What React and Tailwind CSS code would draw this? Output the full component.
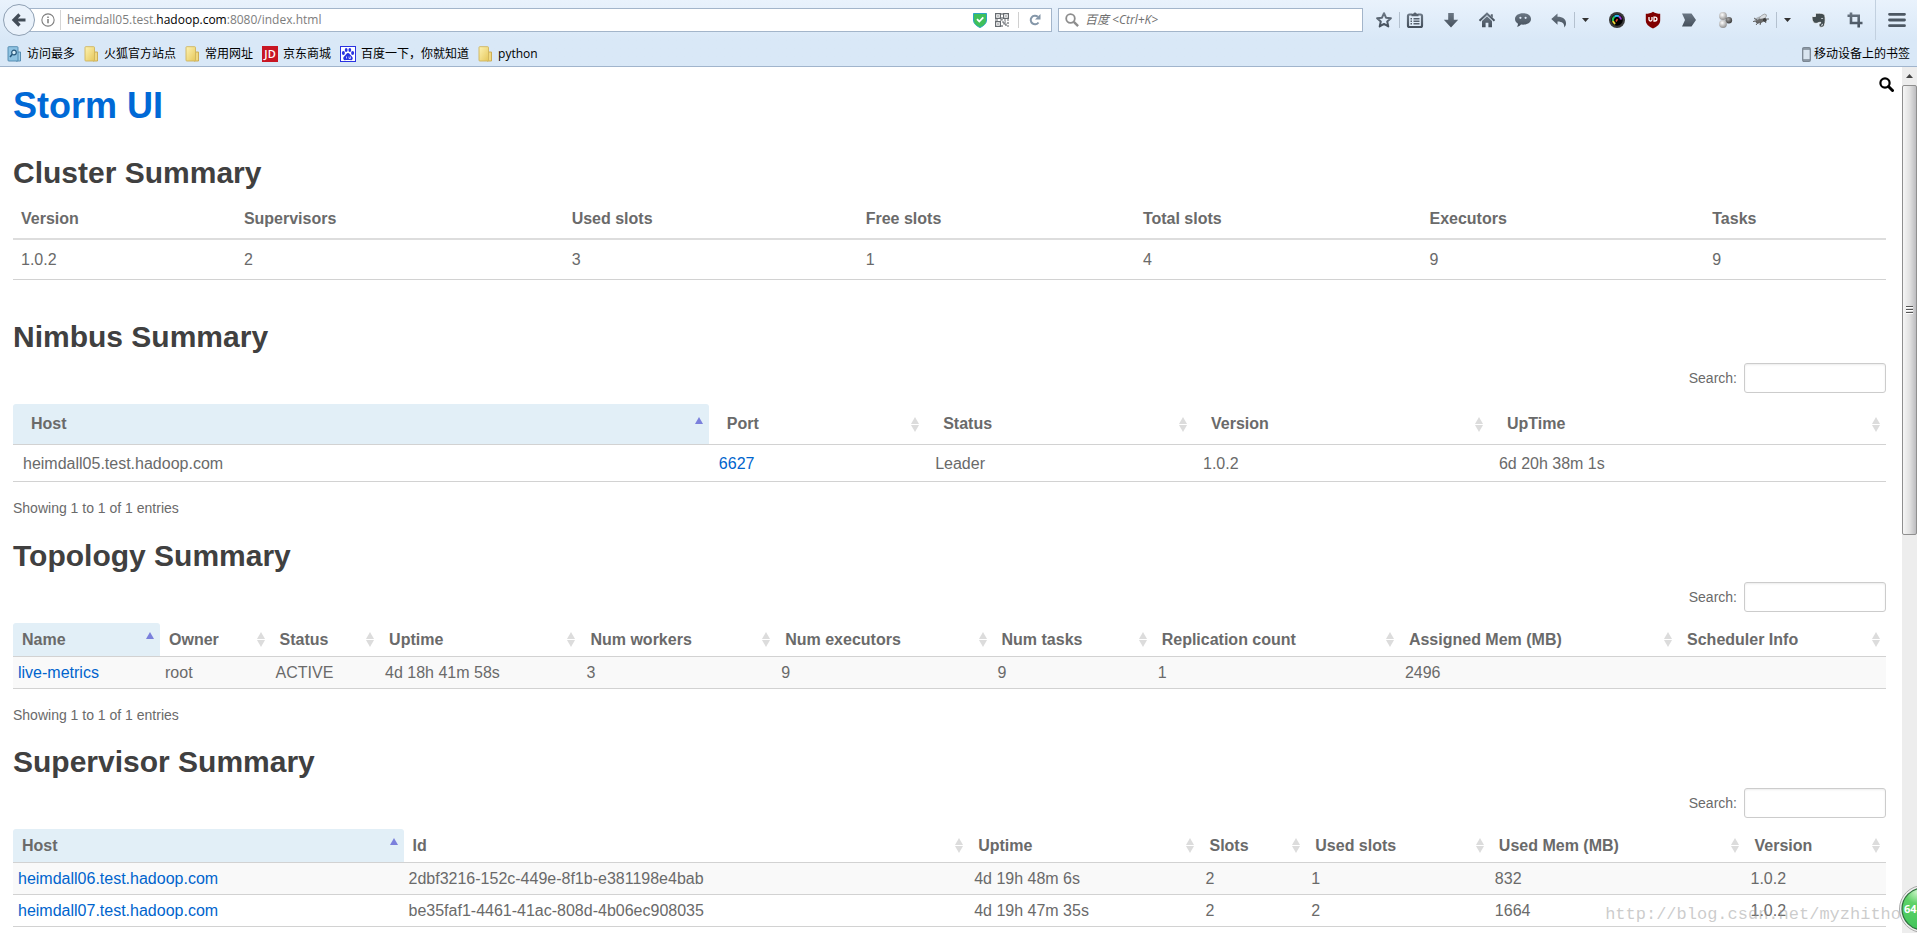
import { useState } from 'react'

const ToolbarDefs = () => (
  <svg width="0" height="0" className="absolute">
    <defs>
      <linearGradient id="steel" x1="0" y1="0" x2="0" y2="1">
        <stop offset="0" stopColor="#6b7784" />
        <stop offset="1" stopColor="#45505c" />
      </linearGradient>
      <linearGradient id="folder" x1="0" y1="0" x2="1" y2="1">
        <stop offset="0" stopColor="#fdf3b4" />
        <stop offset="1" stopColor="#e6c75a" />
      </linearGradient>
      <radialGradient id="ballLight" cx="0.4" cy="0.35" r="0.7">
        <stop offset="0" stopColor="#ffffff" />
        <stop offset="1" stopColor="#8b8b8b" />
      </radialGradient>
      <radialGradient id="ballDark" cx="0.4" cy="0.35" r="0.7">
        <stop offset="0" stopColor="#a5a5a5" />
        <stop offset="1" stopColor="#333333" />
      </radialGradient>
      <radialGradient id="badge" cx="0.35" cy="0.1" r="0.9">
        <stop offset="0" stopColor="#c5f3c4" />
        <stop offset="0.3" stopColor="#5fd267" />
        <stop offset="1" stopColor="#3fc45a" />
      </radialGradient>
    </defs>
  </svg>
)

// Toolbar icons, drawn on an 18x18 grid
const icons = {
  star: <path d="M9 2.2l2 4.5 4.9.5-3.7 3.3 1.1 4.9L9 12.9l-4.3 2.5 1.1-4.9-3.7-3.3 4.9-.5z" fill="none" stroke="url(#steel)" strokeWidth="2" strokeLinejoin="round" />,
  clipboard: (
    <>
      <path d="M6 3.5H3.5A1.5 1.5 0 0 0 2 5v9.5A1.5 1.5 0 0 0 3.5 16h11a1.5 1.5 0 0 0 1.5-1.5V5a1.5 1.5 0 0 0-1.5-1.5H12" fill="none" stroke="url(#steel)" strokeWidth="2.2" />
      <path d="M5.5 5.2V3l2-.5a1.6 1.6 0 0 1 3 0l2 .5v2.2z" fill="#56616d" />
      <path d="M4.5 7.700H6M7.5 7.700h6M4.5 10.200H6M7.5 10.200h6M4.5 12.800H6M7.5 12.800h6" stroke="#56616d" strokeWidth="1.5" />
    </>
  ),
  download: <path d="M6.2 2h5.600v6.800h4.400L9 16.500 1.800 8.800h4.400z" fill="url(#steel)" />,
  home: (
    <>
      <path d="M1.5 9.700L9 2.700l7.500 7" fill="none" stroke="url(#steel)" strokeWidth="2" />
      <path d="M12.8 3.300h2v3.500l-2-1.800z" fill="#5b6672" />
      <path d="M4 9.900l5-4.600 5 4.600v6.300h-3.600v-4.500H7.600v4.500H4z" fill="url(#steel)" />
    </>
  ),
  chat: (
    <>
      <path d="M9 2.300c4.600 0 8 2.300 8 5.700s-3.400 5.700-8 5.700c-.7 0-1.300 0-2-.1-.9 1.300-2.200 2-4 2.200.7-.9 1-1.800 1-3C2.200 11.700 1 10 1 8c0-3.400 3.400-5.700 8-5.700z" fill="url(#steel)" />
      <circle cx="6.4" cy="6.8" r="1.1" fill="#dfebf8" />
      <circle cx="11.6" cy="6.8" r="1.1" fill="#dfebf8" />
    </>
  ),
  undo: <path d="M7.5 2.500v3.300c5.500 0 8.500 2.600 8.500 6.400 0 1.600-.6 3-1.700 4.200.3-4-2-6-6.800-6v3.400L1.300 8z" fill="url(#steel)" />,
  lens: (
    <>
      <circle cx="9" cy="9" r="8" fill="#3a3a3a" />
      <circle cx="9" cy="9" r="5.8" fill="#000" />
      <path d="M5 10A4.200 4.200 0 0 1 6.500 5.700" fill="none" stroke="#23c552" strokeWidth="2" />
      <path d="M6.5 5.700A4.200 4.200 0 0 1 11 5.300" fill="none" stroke="#2bb8e8" strokeWidth="2" />
      <path d="M11 5.300A4.200 4.200 0 0 1 13 8.500" fill="none" stroke="#9b3bd6" strokeWidth="2" />
      <path d="M5 10a4.200 4.200 0 0 0 2.300 2.800" fill="none" stroke="#e9d436" strokeWidth="2" />
      <path d="M8 10.500l1.500-2.500" stroke="#e0452c" strokeWidth="1.5" />
    </>
  ),
  shieldRed: (
    <>
      <path d="M9 .8c2.200 1.500 4.600 2 7.200 2v6.500c0 3.900-3 6.400-7.200 8.200-4.200-1.800-7.200-4.300-7.200-8.200V2.800c2.600 0 5-.5 7.200-2z" fill="#800000" />
      <path d="M5 6v2.500a1.500 1.500 0 0 0 3 0V6M10 6.100v3.900h1a1.900 1.900 0 0 0 0-3.900z" fill="none" stroke="#fff" strokeWidth="1.3" />
    </>
  ),
  arrow: <path d="M2 2.500h9.500l4.500 6.500-4.500 6.500H2L5 9z" fill="url(#steel)" />,
  balls: (
    <>
      <circle cx="7" cy="5" r="3.900" fill="url(#ballLight)" />
      <circle cx="12.8" cy="9.2" r="3.3" fill="url(#ballDark)" />
      <circle cx="7" cy="13" r="3.900" fill="url(#ballLight)" />
    </>
  ),
  fly: (
    <>
      <ellipse cx="8" cy="8" rx="6" ry="2.6" transform="rotate(-18 8 8)" fill="#aeb4ba" />
      <ellipse cx="11" cy="6" rx="4" ry="2" transform="rotate(-35 11 6)" fill="#d9dde1" stroke="#777" strokeWidth=".5" />
      <ellipse cx="8" cy="10" rx="4.5" ry="2" transform="rotate(-20 8 10)" fill="#6a6a6a" />
      <circle cx="12.8" cy="9" r="2" fill="#3c3c3c" />
      <path d="M2 7l3 2M4 14l2.500-3M8 14l1-3M14 12l-1.500-2.500M14.500 8H17M1 10.500l4-.5" stroke="#555" strokeWidth=".9" />
    </>
  ),
  elephant: (
    <>
      <path d="M5.5 2.200h4.300c2.300 0 4.700.8 5 2.300.6 3 .6 6.500-.3 9.500-.4 1.500-1.500 2.200-3 2.200-1.600 0-2.500-.9-2.500-2.300 0-1 .8-1.700 1.700-1.700v-.9c-.9 0-1.700.1-2.200.3-1 .8-3 1-4.300.3C2.700 11 2 8.700 2 6.500c0-.6.3-1 .8-1h2.700z" fill="#434d50" stroke="#f6fafd" strokeWidth=".8" />
      <path d="M11.2 7.700c.6-.5 1.500-.4 1.900.3" stroke="#eef4fb" strokeWidth=".9" fill="none" />
      <path d="M11 14.200h1.400v-1.400" stroke="#eef4fb" strokeWidth=".8" fill="none" />
    </>
  ),
  crop: <path d="M5 1.500V12h11.500M1.500 4.800h11.200v11.700" fill="none" stroke="url(#steel)" strokeWidth="2.6" />,
  menu: <path d="M1.500 3.300h15M1.500 9h15M1.500 14.700h15" stroke="#4d5863" strokeWidth="2.8" strokeLinecap="round" />
}

const ToolButton = ({ name, label, className = 'w-9' }) => (
  <button type="button" aria-label={label} className={`flex h-8 shrink-0 items-center justify-center ${className}`}>
    <svg className="h-[18px] w-[18px]" viewBox="0 0 18 18">{icons[name]}</svg>
  </button>
)

const CaretButton = ({ label }) => (
  <button type="button" aria-label={label} className="flex h-8 w-[22px] shrink-0 items-center">
    <span className="-ml-[3px] h-4 w-px bg-[#b4c1cf]" />
    <svg className="ml-[7px] h-1 w-[7px]" viewBox="0 0 7 4"><path d="M0 0h7L3.500 4z" fill="#333" /></svg>
  </button>
)

const Folder = () => (
  <svg className="h-4 w-[15px]" viewBox="0 0 15 16">
    <path d="M10 6h3.500v9H9z" fill="#f0d981" stroke="#c8a84c" strokeWidth=".9" />
    <rect x="1" y=".7" width="9.5" height="14.3" rx=".8" fill="url(#folder)" stroke="#cfb45c" strokeWidth=".9" />
  </svg>
)

const MostVisited = () => (
  <svg className="h-4 w-[15px]" viewBox="0 0 15 16">
    <path d="M10 6h3.500v9H9z" fill="#9ccbe6" stroke="#4d87ab" strokeWidth=".9" />
    <rect x="1" y=".7" width="10" height="14.3" rx=".8" fill="#8fc3e2" stroke="#4d87ab" strokeWidth=".9" />
    <circle cx="7" cy="6.5" r="2.3" fill="#d5ecf8" stroke="#27567a" strokeWidth="1.2" />
    <path d="M5.3 8.200L3 11" stroke="#27567a" strokeWidth="1.5" />
  </svg>
)

const JdLogo = () => (
  <span className="flex h-4 w-4 items-center justify-center bg-[#c81623] font-['Open_Sans',sans-serif] text-[11px] leading-4 font-semibold text-white">JD</span>
)

const PawLogo = () => (
  <svg className="h-4 w-4" viewBox="0 0 16 16">
    <rect x=".5" y=".5" width="15" height="15" fill="#fff" stroke="#2932e1" />
    <g fill="#2932e1">
      <ellipse cx="3.4" cy="7" rx="1.5" ry="2" />
      <ellipse cx="6.2" cy="4" rx="1.4" ry="2" />
      <ellipse cx="9.8" cy="4" rx="1.4" ry="2" />
      <ellipse cx="12.6" cy="7" rx="1.5" ry="2" />
      <path d="M8 7c1.500 0 2 1.500 3 2.500s2 1.700 1.700 3.200c-.4 1.500-1.800 1.600-2.700 1.400-1.300-.3-2.700-.3-4 0-.9.2-2.300.1-2.700-1.400C3 11.200 4 10.500 5 9.500S6.500 7 8 7z" />
    </g>
    <path d="M6.5 10.500v2M9 10.500v2h1.500v-2" stroke="#fff" strokeWidth=".7" fill="none" />
  </svg>
)

const bookmarks = [
  { icon: MostVisited, label: '访问最多' },
  { icon: Folder, label: '火狐官方站点' },
  { icon: Folder, label: '常用网址' },
  { icon: JdLogo, label: '京东商城' },
  { icon: PawLogo, label: '百度一下，你就知道' },
  { icon: Folder, label: 'python' }
]

const QrIcon = () => (
  <svg className="h-[14px] w-[14px]" viewBox="0 0 14 14" fill="none" stroke="#666b70" strokeWidth="1.2">
    <path d="M.6.6h4.800v4.800H.6zM8.600.6h4.800v4.800H8.600zM.6 8.600h4.800v4.800H.6z" />
    <path d="M2.200 3h1.600M10.200 3h1.600M2.200 11h1.600M0 7h3M5 7h2V4M7 0v2M9 7h2M12 7h2M7 9h2v2h2v2M7 12v2M10 9h1M13 9v2M12 13h2" />
  </svg>
)

const BrowserChrome = () => (
  <header className="shrink-0 border-b border-[#a0b4cc] bg-linear-to-b from-[#e9f2fc] to-[#d9e8f7] to-60% font-['Open_Sans','Noto_Sans_CJK_SC',sans-serif] text-xs text-black">
    <div className="flex h-10 items-center">
      <div className="flex min-w-0 flex-1 items-center pl-[3px]">
        <button type="button" aria-label="Back" className="z-10 flex h-8 w-8 shrink-0 items-center justify-center rounded-full border border-[#8fa0b3] bg-[#eaf2fb]">
          <svg className="h-4 w-4" viewBox="0 0 16 16"><path d="M14.500 8H4M8.500 2.500L3 8l5.500 5.500" fill="none" stroke="#434d58" strokeWidth="3.2" /></svg>
        </button>
        <div className="-ml-2 flex h-6 min-w-0 flex-1 items-center border border-[#a3b5ca] bg-white pl-[13px]">
          <svg className="h-[14px] w-[14px] shrink-0" viewBox="0 0 13 13">
            <circle cx="6.5" cy="6.5" r="5.7" fill="none" stroke="#7d7d7d" />
            <path d="M6.500 5.600v4M6.500 3.200v1.400" stroke="#7d7d7d" strokeWidth="1.4" />
          </svg>
          <span className="mr-[6px] ml-[5px] h-5 w-px shrink-0 bg-[#d5d5d5]" />
          <div className="min-w-0 flex-1 truncate text-[#7d7d7d]">
            heimdall05.test.<span className="text-black">hadoop.com</span>:8080/index.html
          </div>
          <svg className="h-4 w-[14px] shrink-0" viewBox="0 0 14 16">
            <path d="M.5 1.500h13V8c0 3.700-3 6-6.500 7.500C3.500 14 .5 11.700.5 8z" fill="#3fc05a" stroke="#2ba5c4" />
            <path d="M4 7.200l2.300 2.300 4-4.200" fill="none" stroke="#fff" strokeWidth="1.8" />
          </svg>
          <span className="ml-2"><QrIcon /></span>
          <span className="ml-[9px] h-4 w-px shrink-0 bg-[#d0d0d0]" />
          <button type="button" aria-label="Reload" className="flex h-6 w-8 shrink-0 items-center justify-center">
            <svg className="h-3 w-3" viewBox="0 0 12 12">
              <path d="M9.500 8.500A4.300 4.300 0 1 1 8.800 2.700" fill="none" stroke="#8496a8" strokeWidth="2" />
              <path d="M11.500 0v5.500H6z" fill="#8496a8" />
            </svg>
          </button>
        </div>
        <label className="ml-[6px] flex h-6 w-[305px] shrink-0 items-center border border-[#a3b5ca] bg-white">
          <svg className="ml-[6px] h-[14px] w-[14px]" viewBox="0 0 14 14">
            <circle cx="5.5" cy="5.5" r="4.3" fill="none" stroke="#8d8d8d" strokeWidth="1.8" />
            <path d="M8.800 8.800l4.300 4.300" stroke="#8d8d8d" strokeWidth="2.4" />
          </svg>
          <input aria-label="搜索" placeholder="百度 <Ctrl+K>" className="ml-[6px] min-w-0 flex-1 bg-transparent text-xs placeholder:text-[#707070] placeholder:italic focus:outline-none" />
        </label>
      </div>

      <nav className="flex shrink-0 items-center">
        <ToolButton name="star" label="Bookmark" className="ml-[5px] w-[31px]" />
        <span className="-mr-px h-4 w-px bg-[#b4c1cf]" />
        <ToolButton name="clipboard" label="Bookmarks list" className="w-8" />
        <ToolButton name="download" label="Downloads" className="ml-[2px] w-9" />
        <ToolButton name="home" label="Home" />
        <ToolButton name="chat" label="Chat" />
        <ToolButton name="undo" label="Undo" />
        <CaretButton label="Undo options" />
        <ToolButton name="lens" label="Lens" />
        <ToolButton name="shieldRed" label="Blocker" />
        <ToolButton name="arrow" label="Arrow" />
        <ToolButton name="balls" label="Groups" />
        <ToolButton name="fly" label="Debugger" />
        <CaretButton label="Debugger options" />
        <ToolButton name="elephant" label="Notes" />
        <ToolButton name="crop" label="Crop" />
        <span className="ml-[2px] h-10 w-px bg-[#c2d0df]" />
        <ToolButton name="menu" label="Menu" className="w-[41px]" />
      </nav>
    </div>

    <div className="flex h-[26px] items-center justify-between pt-[2px] pr-[7px] pl-[7px]">
      <nav className="flex items-center gap-[9px]">
        {bookmarks.map(({ icon: Icon, label }) => (
          <a key={label} href="#" className="flex items-center gap-[5px] whitespace-nowrap">
            <Icon />
            {label}
          </a>
        ))}
      </nav>
      <a href="#" className="flex items-center gap-[3px] whitespace-nowrap">
        <svg className="h-[15px] w-[9px]" viewBox="0 0 9 15">
          <rect x=".7" y=".7" width="7.6" height="13.6" rx="1.2" fill="#d9e5f0" stroke="#7b8793" strokeWidth="1.3" />
          <path d="M1 2h7M1 13h7" stroke="#7b8793" strokeWidth="1.5" />
        </svg>
        移动设备上的书签
      </a>
    </div>
  </header>
)

const SortIcon = ({ sorted }) => (
  <svg className="h-[15px] w-2 shrink-0" viewBox="0 0 8 15">
    <path d="M4 0l4 7H0z" fill={sorted ? '#7b80dc' : '#dcdcdc'} />
    {!sorted && <path d="M4 15l4-7H0z" fill="#dcdcdc" />}
  </svg>
)

// A cell is a plain string, or { href, text } for a link
const cellText = cell => (cell.href ? cell.text : cell)

const DataTable = ({ id, columns, rows, compact, info }) => {
  const [query, setQuery] = useState('')
  const visible = rows.filter(row => row.some(cell => cellText(cell).toLowerCase().includes(query.toLowerCase())))

  return (
    <div>
      <div className="flex items-center justify-end gap-[7px]">
        <label htmlFor={id} className="text-sm">Search:</label>
        <input
          id={id}
          type="search"
          value={query}
          onChange={e => setQuery(e.target.value)}
          className="h-[30px] w-[142px] rounded-[3px] border border-[#ccc] px-1 text-sm shadow-[inset_0_1px_2px_rgba(0,0,0,0.08)]"
        />
      </div>
      <table className="mt-[11px] w-full table-fixed border-separate border-spacing-0 text-left">
        <thead>
          <tr>
            {columns.map((col, i) => (
              <th
                key={col.label}
                aria-sort={i === 0 ? 'ascending' : 'none'}
                className={`border-b border-[#d2d2d2] p-0 ${col.width} ${i === 0 ? 'rounded-t-[3px] bg-[#e2eff7]' : ''}`}
              >
                <button type="button" className={`flex w-full items-center justify-between pr-[6px] font-bold whitespace-nowrap ${compact ? 'py-[6px] pl-[9px] leading-[21px]' : 'py-[10px] pl-[18px] leading-5'}`}>
                  {col.label}
                  <SortIcon sorted={i === 0} />
                </button>
              </th>
            ))}
          </tr>
        </thead>
        <tbody>
          {visible.map((row, r) => (
            <tr key={r} className={compact && r % 2 === 0 ? 'bg-[#f9f9f9]' : ''}>
              {row.map((cell, i) => (
                <td key={i} className={`border-b border-[#d2d2d2] ${compact ? 'px-[5px] py-[5px] leading-[21px]' : 'px-[10px] pt-[9px] pb-[7px] leading-5'}`}>
                  {cell.href ? <a href={cell.href} className="text-[#0064cd]">{cell.text}</a> : cell}
                </td>
              ))}
            </tr>
          ))}
        </tbody>
      </table>
      {info && <p className="mt-4 text-sm leading-5">{info}</p>}
    </div>
  )
}

const clusterColumns = [
  { label: 'Version', value: '1.0.2', width: 'w-[11.9%]' },
  { label: 'Supervisors', value: '2', width: 'w-[17.5%]' },
  { label: 'Used slots', value: '3', width: 'w-[15.7%]' },
  { label: 'Free slots', value: '1', width: 'w-[14.8%]' },
  { label: 'Total slots', value: '4', width: 'w-[15.3%]' },
  { label: 'Executors', value: '9', width: 'w-[15.1%]' },
  { label: 'Tasks', value: '9', width: 'w-[9.7%]' }
]

const nimbusColumns = [
  { label: 'Host', width: 'w-[37.15%]' },
  { label: 'Port', width: 'w-[11.55%]' },
  { label: 'Status', width: 'w-[14.3%]' },
  { label: 'Version', width: 'w-[15.8%]' },
  { label: 'UpTime', width: 'w-[21.2%]' }
]

const topologyColumns = [
  { label: 'Name', width: 'w-[7.85%]' },
  { label: 'Owner', width: 'w-[5.9%]' },
  { label: 'Status', width: 'w-[5.85%]' },
  { label: 'Uptime', width: 'w-[10.75%]' },
  { label: 'Num workers', width: 'w-[10.4%]' },
  { label: 'Num executors', width: 'w-[11.55%]' },
  { label: 'Num tasks', width: 'w-[8.55%]' },
  { label: 'Replication count', width: 'w-[13.2%]' },
  { label: 'Assigned Mem (MB)', width: 'w-[14.85%]' },
  { label: 'Scheduler Info', width: 'w-[11.1%]' }
]

const supervisorColumns = [
  { label: 'Host', width: 'w-[20.85%]' },
  { label: 'Id', width: 'w-[30.2%]' },
  { label: 'Uptime', width: 'w-[12.35%]' },
  { label: 'Slots', width: 'w-[5.65%]' },
  { label: 'Used slots', width: 'w-[9.8%]' },
  { label: 'Used Mem (MB)', width: 'w-[13.65%]' },
  { label: 'Version', width: 'w-[7.5%]' }
]

const SectionTitle = ({ children, className }) => (
  <h2 className={`mb-2 text-[30px] leading-9 font-bold text-[#404040] ${className}`}>{children}</h2>
)

const Scrollbar = () => (
  <div className="flex w-[15px] shrink-0 flex-col bg-[#ededed]">
    <div className="flex h-[18px] items-center justify-center">
      <svg className="h-1 w-[7px]" viewBox="0 0 7 4"><path d="M3.500 0L7 4H0z" fill="#444" /></svg>
    </div>
    <div className="flex h-[52%] flex-col items-center justify-center rounded-[2px] border border-[#8f8f8f] bg-linear-to-r from-[#f6f6f6] via-[#e2e2e2] to-[#bcbcbf]">
      <svg className="h-2 w-[7px]" viewBox="0 0 7 8">
        <path d="M0 1.500h7M0 4.500h7M0 7.500h7" stroke="#fff" />
        <path d="M0 .5h7M0 3.500h7M0 6.500h7" stroke="#555" />
      </svg>
    </div>
  </div>
)

export default function App() {
  return (
    <div className="relative flex h-screen flex-col overflow-hidden bg-white font-['Liberation_Sans',Arial,sans-serif] text-base text-[#6a6a6a]">
      <ToolbarDefs />
      <BrowserChrome />

      <div className="flex min-h-0 flex-1">
        <main className="relative min-w-0 flex-1 overflow-hidden pt-4 pr-4 pl-[13px]">
          <h1 className="text-4xl leading-[46px] font-bold">
            <a href="#" className="text-[#0069d6]">Storm UI</a>
          </h1>
          <button type="button" aria-label="Search logs" className="absolute top-[10px] right-2">
            <svg className="h-[15px] w-[15px]" viewBox="0 0 15 15">
              <circle cx="6" cy="6" r="4.6" fill="none" stroke="#000" strokeWidth="2.2" />
              <path d="M9.500 9.500l4 4" stroke="#000" strokeWidth="3" strokeLinecap="round" />
            </svg>
          </button>

          {/* Cluster */}
          <SectionTitle className="mt-[26px]">Cluster Summary</SectionTitle>
          <table className="w-full table-fixed border-separate border-spacing-0 text-left leading-[21px]">
            <thead>
              <tr>
                {clusterColumns.map(col => (
                  <th key={col.label} className={`border-b-2 border-[#ddd] px-2 py-[9px] font-bold ${col.width}`}>{col.label}</th>
                ))}
              </tr>
            </thead>
            <tbody>
              <tr>
                {clusterColumns.map(col => (
                  <td key={col.label} className="border-b border-[#d2d2d2] px-2 py-[9px]">{col.value}</td>
                ))}
              </tr>
            </tbody>
          </table>

          {/* Nimbus */}
          <SectionTitle className="mt-[39px]">Nimbus Summary</SectionTitle>
          <DataTable
            id="nimbus-search"
            columns={nimbusColumns}
            rows={[['heimdall05.test.hadoop.com', { href: '#', text: '6627' }, 'Leader', '1.0.2', '6d 20h 38m 1s']]}
            info="Showing 1 to 1 of 1 entries"
          />

          {/* Topologies */}
          <SectionTitle className="mt-5">Topology Summary</SectionTitle>
          <DataTable
            id="topology-search"
            compact
            columns={topologyColumns}
            rows={[[{ href: '#', text: 'live-metrics' }, 'root', 'ACTIVE', '4d 18h 41m 58s', '3', '9', '9', '1', '2496', '']]}
            info="Showing 1 to 1 of 1 entries"
          />

          {/* Supervisors */}
          <SectionTitle className="mt-[19px]">Supervisor Summary</SectionTitle>
          <DataTable
            id="supervisor-search"
            compact
            columns={supervisorColumns}
            rows={[
              [{ href: '#', text: 'heimdall06.test.hadoop.com' }, '2dbf3216-152c-449e-8f1b-e381198e4bab', '4d 19h 48m 6s', '2', '1', '832', '1.0.2'],
              [{ href: '#', text: 'heimdall07.test.hadoop.com' }, 'be35faf1-4461-41ac-808d-4b06ec908035', '4d 19h 47m 35s', '2', '2', '1664', '1.0.2']
            ]}
          />
        </main>
        <Scrollbar />
      </div>

      <p className="pointer-events-none absolute right-4 bottom-[6px] font-['Liberation_Mono',monospace] text-[17px] leading-6 text-[#999]/50">http://blog.csdn.net/myzhitho</p>

      {/* Speed badge, half outside the window */}
      <div className="absolute -right-[30px] bottom-0 flex h-12 w-12 items-center">
        <svg className="absolute inset-0 h-12 w-12" viewBox="0 0 48 48">
          <circle cx="24" cy="24" r="23.5" fill="#eee" stroke="#a9a9a9" />
          <circle cx="24" cy="24" r="21" fill="url(#badge)" stroke="#2c6e3b" strokeWidth="1.2" />
        </svg>
        <span className="relative pl-[5px] font-['Open_Sans',sans-serif] text-[11px] font-bold text-white">64</span>
      </div>
    </div>
  )
}
